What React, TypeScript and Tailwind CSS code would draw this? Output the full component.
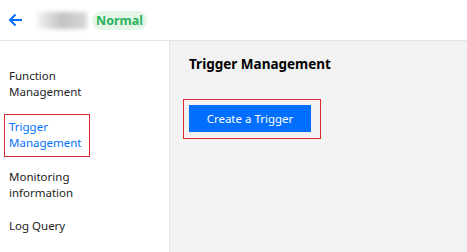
import React from "react";

export default function App() {
  const font = { fontFamily: '"Noto Sans", "Open Sans", sans-serif' };
  return (
    <div className="w-[467px] h-[252px] bg-white flex flex-col overflow-hidden" style={font}>
      <div className="h-[41px] flex items-center border-b border-[#e2e2e2] shrink-0">
        <svg className="ml-[8px]" width="15" height="14" viewBox="0 0 15 14" fill="none">
          <path d="M14 7H2M7.5 1.5L2 7l5.5 5.5" stroke="#006eff" strokeWidth="2" />
        </svg>
        <div className="ml-[14px] w-[50px] h-[17px] bg-gradient-to-r from-[#f4f4f4] via-[#c2c2c2] to-[#d8d8d8] blur-[2px]" />
        <span className="ml-[5px] h-[19px] px-[4px] rounded-full bg-[#e4f6e8] text-[#29b35a] text-[12.5px] font-bold leading-[19px]">Normal</span>
      </div>
      <div className="flex flex-1">
        <div className="w-[170px] border-r border-[#e2e2e2] bg-white pt-[27px] text-[11.5px] leading-[16px] text-[#222]">
          <div className="px-[9px]">Function<br />Management</div>
          <div className="mt-[14px] ml-[4px] w-[86px] h-[43px] border border-[#e0262d] px-[4px] pt-[4px] text-[#0071ff]">Trigger<br />Management</div>
          <div className="mt-[12px] px-[9px]">Monitoring<br />information</div>
          <div className="mt-[17px] px-[9px]">Log Query</div>
        </div>
        <div className="flex-1 bg-[#f2f2f2] pl-[19px] pt-[14px]">
          <div className="text-[13.5px] font-bold leading-[18px] text-black">Trigger Management</div>
          <div className="mt-[26px] -ml-[6px] w-[138px] h-[40px] border border-[#e0262d] p-[5px]">
            <button className="w-[122px] h-[27px] bg-[#006eff] text-white text-[11.5px] leading-[27px]">Create a Trigger</button>
          </div>
        </div>
      </div>
    </div>
  );
}
